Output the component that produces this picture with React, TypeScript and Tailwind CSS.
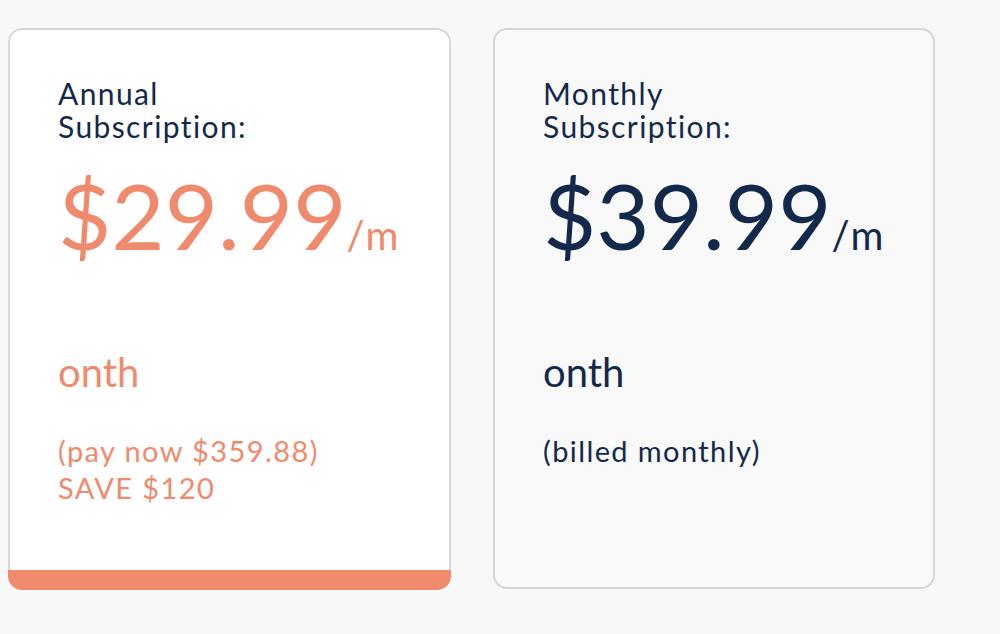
import React from "react";

const font = { fontFamily: "Lato, 'Noto Sans', sans-serif" };

function CardBody({ title, price, tone, extra }: { title: [string, string]; price: string; tone: "orange" | "navy"; extra: React.ReactNode }) {
  const c = tone === "orange" ? "text-[#ef8a6c]" : "text-[#13294b]";
  return (
    <div className="flex flex-col pl-12 pt-[47px]">
      <div className="text-[30px] leading-[33px] tracking-[1.4px] text-[#13294b]">
        <div>{title[0]}</div>
        <div>{title[1]}</div>
      </div>
      <div className={`mt-[26px] leading-none ${c}`}>
        <span className="text-[92px] leading-none">{price}</span>
        <span className="text-[40px] leading-none tracking-[2px]">/m</span>
      </div>
      <div className={`mt-[91px] text-[40px] leading-[40px] ${c}`}>onth</div>
      <div className={`mt-[40px] text-[29px] leading-[37px] tracking-[1.4px] ${c}`}>{extra}</div>
    </div>
  );
}

export default function App() {
  return (
    <div className="min-h-[634px] w-[1000px] bg-[#f8f8f8]" style={font}>
      <div className="flex gap-[42px] pl-2 pt-7">
        <div className="flex h-[562px] w-[443px] flex-col overflow-hidden rounded-[14px] bg-white">
          <div className="flex-1 rounded-t-[14px] border-2 border-b-0 border-[#d3d6db]">
            <CardBody
              title={["Annual", "Subscription:"]}
              price="$29.99"
              tone="orange"
              extra={
                <>
                  <div>(pay now $359.88)</div>
                  <div>SAVE $120</div>
                </>
              }
            />
          </div>
          <div className="h-5 bg-[#ef8a6c]" />
        </div>
        <div className="h-[561px] w-[442px] rounded-[14px] border-2 border-[#d3d6db] bg-[#f9f9fa]">
          <CardBody
            title={["Monthly", "Subscription:"]}
            price="$39.99"
            tone="navy"
            extra={<div>(billed monthly)</div>}
          />
        </div>
      </div>
    </div>
  );
}
